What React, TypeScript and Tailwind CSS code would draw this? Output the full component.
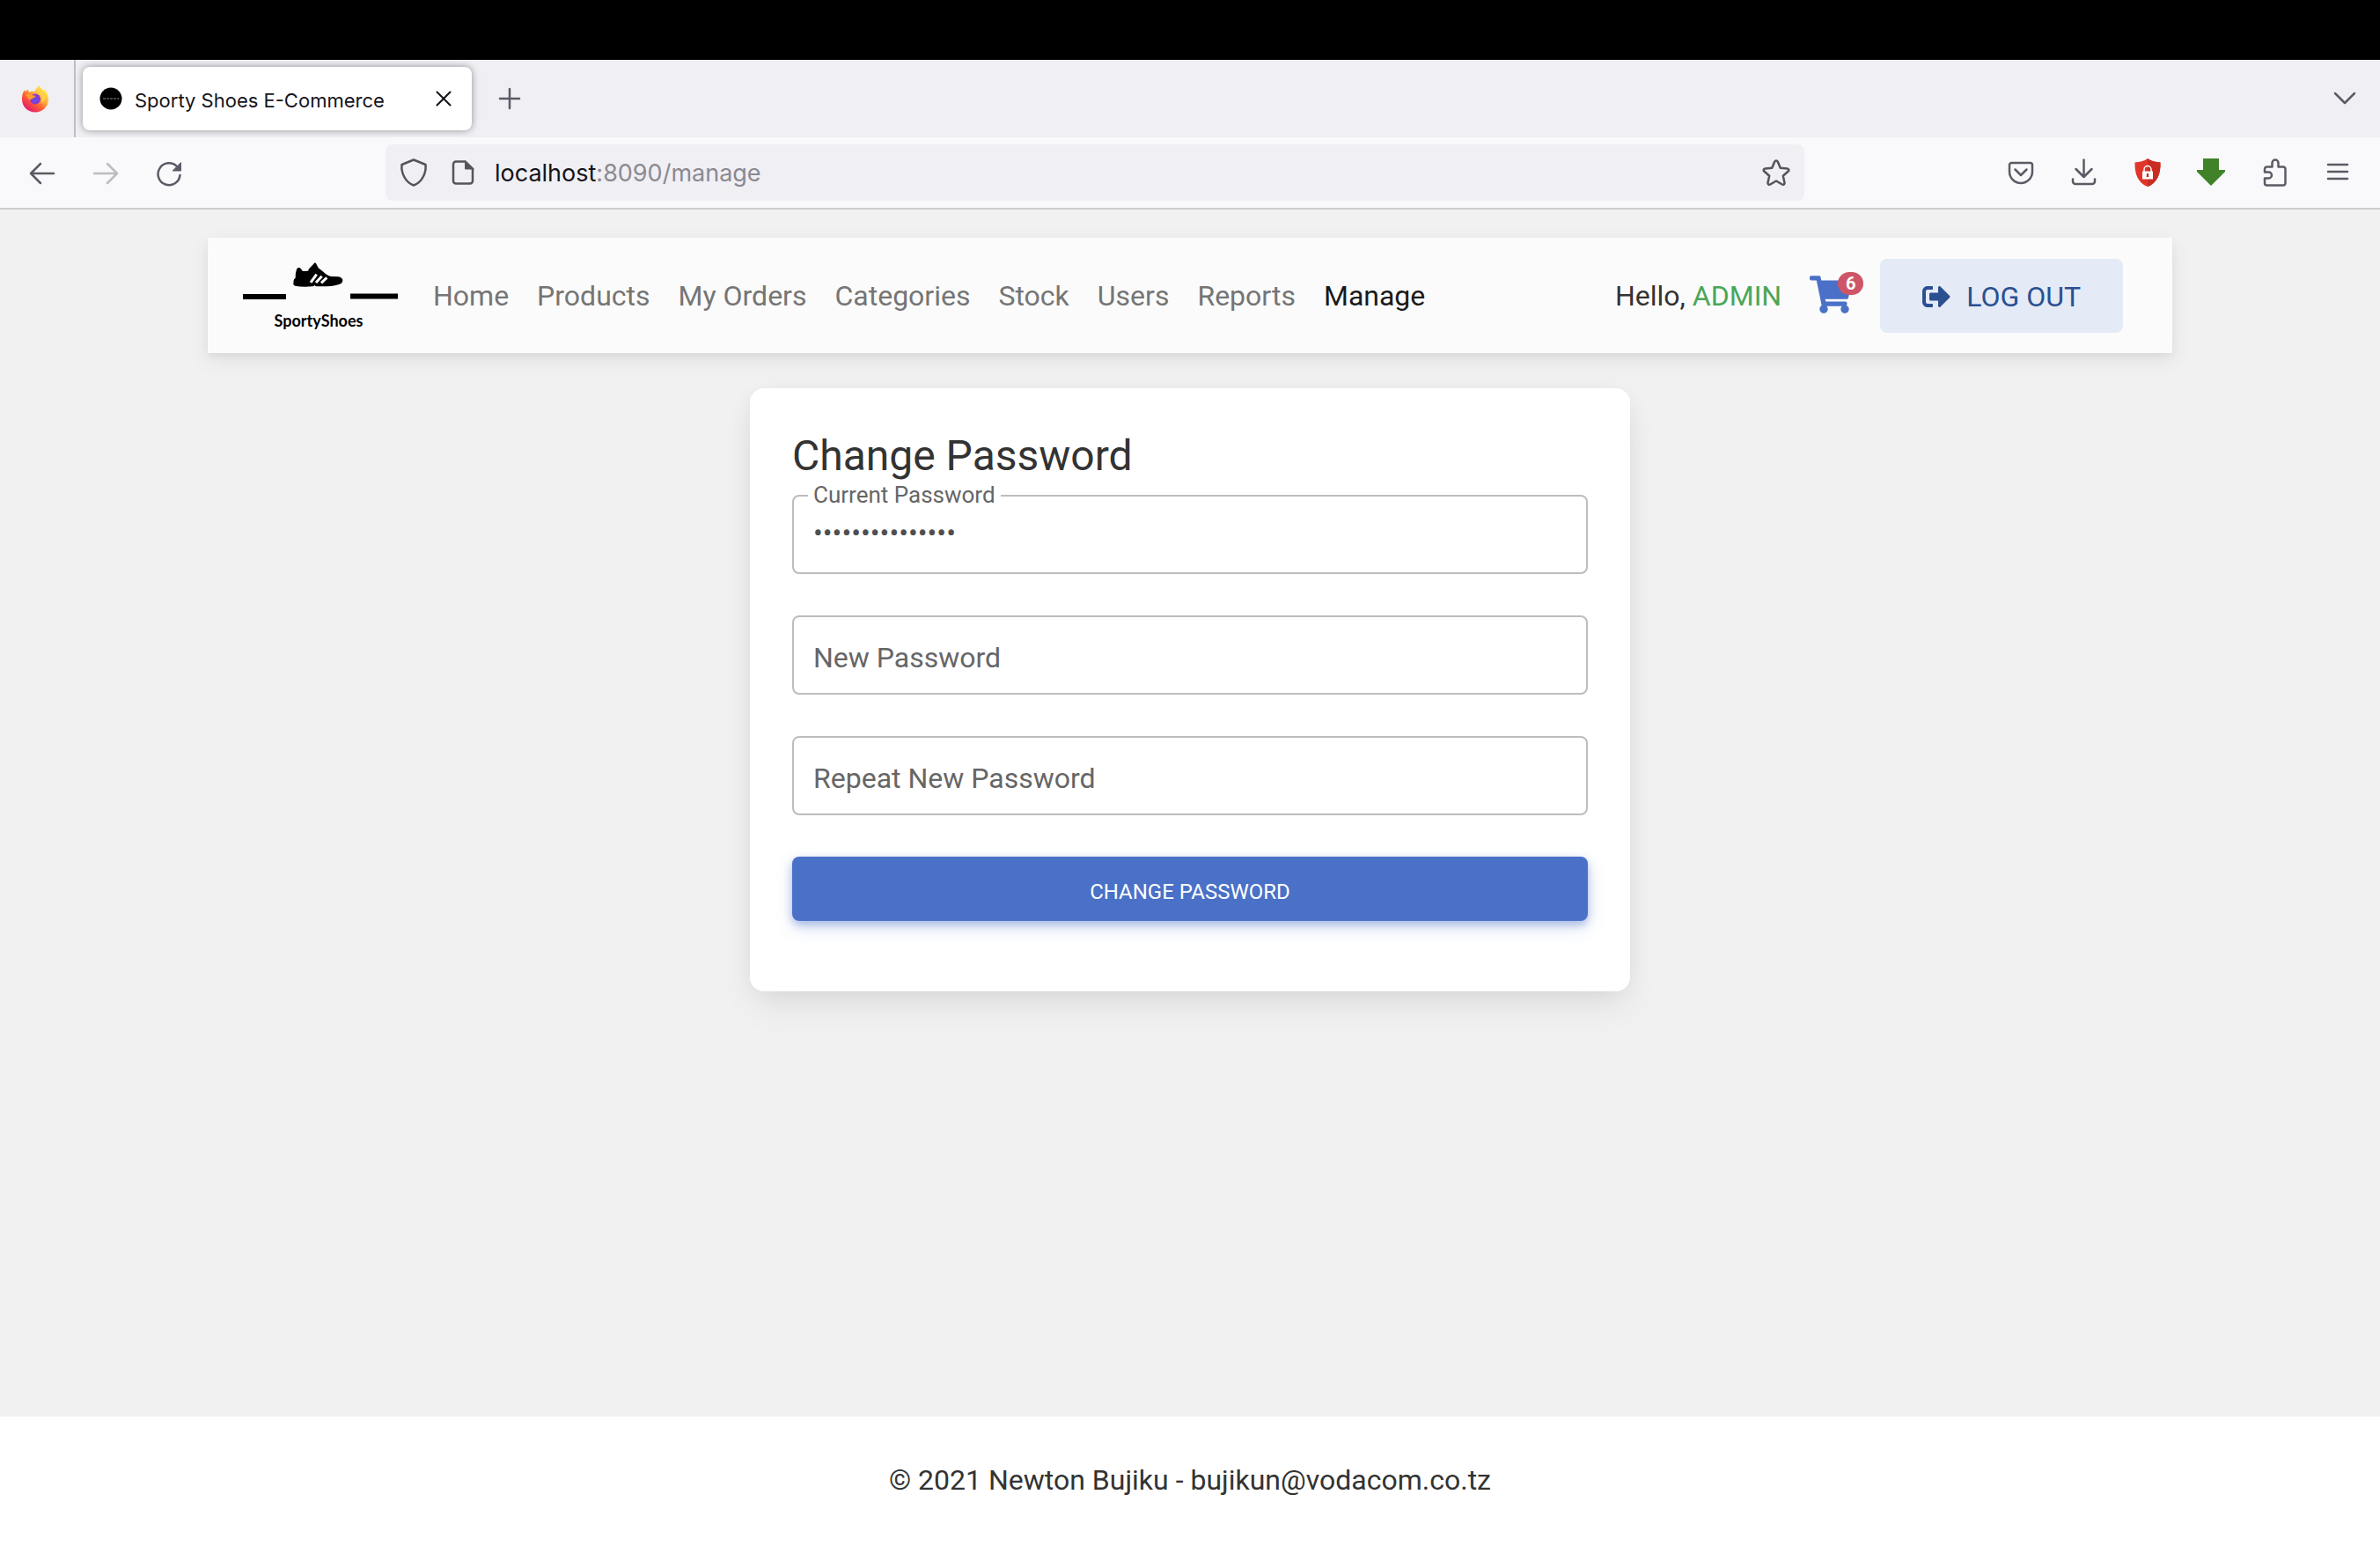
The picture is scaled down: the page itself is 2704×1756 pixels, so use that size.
import React from "react";
import { FaShoppingCart, FaSignOutAlt } from "react-icons/fa";

const navLinks = ["Home", "Products", "My Orders", "Categories", "Stock", "Users", "Reports", "Manage"];

function Icon({ children, className = "text-[#5b5b66]" }: { children: React.ReactNode; className?: string }) {
  return (
    <svg
      viewBox="0 0 32 32"
      className={`size-8 shrink-0 ${className}`}
      fill="none"
      stroke="currentColor"
      strokeWidth="2.5"
      strokeLinecap="round"
      strokeLinejoin="round"
      aria-hidden="true"
    >
      {children}
    </svg>
  );
}

function ToolButton({ label, children }: { label: string; children: React.ReactNode }) {
  return (
    <button type="button" aria-label={label} className="flex shrink-0 items-center justify-center">
      {children}
    </button>
  );
}

function FirefoxLogo() {
  return (
    <svg viewBox="0 0 32 32" className="size-8" aria-label="Firefox" role="img">
      <defs>
        <linearGradient id="ff-body" x1="0.85" y1="0.1" x2="0.2" y2="0.95">
          <stop offset="0" stopColor="#fff44f" />
          <stop offset="0.35" stopColor="#ffb03a" />
          <stop offset="0.65" stopColor="#ff5634" />
          <stop offset="1" stopColor="#e0157b" />
        </linearGradient>
        <radialGradient id="ff-globe" cx="0.5" cy="0.6" r="0.6">
          <stop offset="0" stopColor="#6a4be8" />
          <stop offset="1" stopColor="#8f35c9" />
        </radialGradient>
      </defs>
      <path
        fill="url(#ff-body)"
        d="M20 1c-1 2.500-4 4-4.500 7-3-.5-5 0-6 .8C8.300 8 7.800 6.500 7.800 5.500 6.500 6.200 5.800 7.200 5.300 8 4.500 7.500 4.300 6.500 4.300 6 1.500 9 1 13 1 16.500 1 25 7.500 31.500 16 31.500S31 25 31 17c0-5-2-9.500-5-11.500 0 1 .3 2 .2 3C25 5.500 21.500 4 20 1z"
      />
      <circle cx="16" cy="16.500" r="6" fill="url(#ff-globe)" />
      <path fill="#ff9a2e" d="M5 12c3-2.500 6-1.500 8 .3 1.500.2 3 .2 3.500.7-.3 1.500-2.500 2-3.500 2.700-1 1.300-2.500 1-3.500 1.800C8 16 6 14 5 12z" />
      <path fill="#ffd24a" d="M20 2c-2.500 3-2.500 6 .5 8 4 3 4.500 8 2 11.500 5-2 6.500-9 3-13.500C24 5.500 21 4.500 20 2z" />
    </svg>
  );
}

function SiteLogo() {
  return (
    <a href="#home" aria-label="SportyShoes" className="flex w-44 shrink-0 flex-col items-center">
      <svg viewBox="0 0 176 56" className="h-14 w-full" aria-hidden="true">
        <path d="M0 40h49v6H0zM122 39.500h54v6h-54z" />
        <g transform="translate(-16 -10) scale(0.3333)">
          <path d="M232 64q6-7 13-1l6 8q2 2 5 1l13-1q4-1 3-6l17-18q5-7 9 0l7 14 18 14q14 14 26 15l24 1q14 3 15 11 1 8-5 12-18 9-50 10h-33q-5 0-7-4-4 4-9 4-34 3-58-2-7-1-6-7l1-12q1-4 6-8 0-20 5-31z" />
          <path stroke="#fbfbfb" strokeWidth="9" fill="none" d="M279 111l20-28M297 111l20-22M315 112l19-18" />
        </g>
      </svg>
      <span className="pr-1 font-['Lato',sans-serif] text-lg leading-7 font-bold text-black">SportyShoes</span>
    </a>
  );
}

function PasswordField({ id, label, value }: { id: string; label: string; value?: string }) {
  const filled = Boolean(value);
  return (
    <div className="relative">
      <input
        id={id}
        type="password"
        defaultValue={value}
        className="block h-[90px] w-full rounded-lg border-2 border-[#bdbdbd] bg-transparent px-[22px] pb-1 text-[32px] text-[#4f4f4f] outline-none"
      />
      <label
        htmlFor={id}
        className={
          filled
            ? "absolute -top-3.5 left-[18px] bg-white pr-1.5 pl-1.5 text-[26px] leading-7 text-[#666]"
            : "absolute top-6 left-6 text-[32px] leading-[48px] text-[#666]"
        }
      >
        {label}
      </label>
    </div>
  );
}

function BrowserChrome() {
  return (
    <header className="font-['Inter',sans-serif]">
      <div className="h-17 bg-black" />
      <div className="flex h-22 items-center bg-[#f0eff4] pr-6">
        <div className="flex h-full w-[86px] items-center border-r-2 border-[#bfbfc3] pl-6">
          <FirefoxLogo />
        </div>
        <div className="ml-2 flex h-18 w-[442px] items-center rounded-lg bg-white pr-4 pl-4 shadow-[0_0_8px_rgba(0,0,0,0.4)]">
          <svg viewBox="0 0 32 32" className="size-8" aria-hidden="true">
            <circle cx="16" cy="16" r="12.500" fill="#000" />
            <path d="M7 16h18" stroke="#444" strokeWidth="2" strokeDasharray="3 1" />
          </svg>
          <span className="ml-[11px] flex-1 pt-1 text-[22px] leading-8 text-[#15141a]">Sporty Shoes E-Commerce</span>
          <ToolButton label="Close tab">
            <Icon className="text-[#15141a]">
              <path strokeWidth="2" d="M8.500 8.500l15 15M23.500 8.500l-15 15" />
            </Icon>
          </ToolButton>
        </div>
        <div className="ml-[27px] flex flex-1 items-center justify-between">
          <ToolButton label="New tab">
            <Icon><path d="M16 5v22M5 16h22" /></Icon>
          </ToolButton>
          <ToolButton label="List all tabs">
            <Icon><path d="M5 10l11 11 11-11" /></Icon>
          </ToolButton>
        </div>
      </div>
      <div className="flex h-[82px] items-center border-b-2 border-[#ccc] bg-[#f9f9fb] px-8">
        <div className="flex w-[406px] shrink-0 items-center gap-10">
          <ToolButton label="Back">
            <Icon><path d="M29 17H3M14 6L3 17l11 11" /></Icon>
          </ToolButton>
          <ToolButton label="Forward">
            <Icon className="text-[#bcbcc1]"><path d="M3 17h26M18 6l11 11-11 11" /></Icon>
          </ToolButton>
          <ToolButton label="Reload">
            <Icon>
              <path d="M28.500 19A12.500 12.500 0 1 1 25 9" />
              <path fill="currentColor" strokeWidth="1" d="M29.500 5v9h-9z" />
            </Icon>
          </ToolButton>
        </div>
        <div className="flex h-16 flex-1 items-center rounded-lg bg-[#f0eff4] px-4">
          <Icon className="text-[#55545c]">
            <path d="M16 1.500L29.500 7c1 9.500-4 20-13.500 23.500C6.500 27 1.500 16.500 2.500 7z" />
          </Icon>
          <Icon className="ml-6 text-[#55545c]">
            <path d="M18 3.500H8A3 3 0 0 0 5 6.500v19a3 3 0 0 0 3 3h16a3 3 0 0 0 3-3V12L18.500 3.500z" />
            <path fill="currentColor" strokeWidth="1" d="M18.500 3v9H28z" />
          </Icon>
          <div className="ml-5 flex-1 pt-0.5 text-[27px] text-[#8a8990]">
            <span className="text-[#15141a]">localhost</span>:8090/manage
          </div>
          <ToolButton label="Bookmark this page">
            <Icon className="text-[#55545c]">
              <path d="M14.300 3.500c.7-1.500 2.700-1.500 3.400 0l3.100 7.200 7.800.7c1.700.2 2.300 2 1.100 3.100l-5.900 5.300 1.700 7.800c.3 1.600-1.300 2.700-2.700 1.900L16 25.500l-6.800 4c-1.400.8-3-.3-2.700-1.900l1.700-7.800-5.900-5.300c-1.200-1.100-.6-2.900 1.100-3.100l7.800-.7z" />
            </Icon>
          </ToolButton>
        </div>
        <div className="flex w-[622px] shrink-0 items-center justify-end gap-10">
          <ToolButton label="Save to Pocket">
            <Icon>
              <path d="M5.500 5h21A2.500 2.500 0 0 1 29 7.500V15a13 13 0 0 1-26 0V7.500A2.500 2.500 0 0 1 5.500 5z" />
              <path d="M9.500 12.500L16 19l6.500-6.500" />
            </Icon>
          </ToolButton>
          <ToolButton label="Downloads">
            <Icon><path d="M15.500 1.500V21M6.500 12l9 9 9-9M3 23.500V26a3 3 0 0 0 3 3h19a3 3 0 0 0 3-3v-2.500" /></Icon>
          </ToolButton>
          <ToolButton label="Ad blocker">
            <svg viewBox="0 0 32 32" className="size-8" aria-hidden="true">
              <path fill="#e2352a" d="M16 0c4 3 9 4 14.500 4.500C31 17 27 28 16 32 5 28 1 17 1.500 4.500 7 4 12 3 16 0z" />
              <path fill="#c92c22" d="M16 0c4 3 9 4 14.500 4.500C31 17 27 28 16 32z" />
              <path fill="none" stroke="#fff" strokeWidth="1.5" d="M12 15v-2.500a4 4 0 0 1 8 0V15" />
              <path fill="#fff" d="M10 14.500h12v9H10z" />
              <path fill="#c92c22" d="M15 17h2l.3 4h-2.600z" />
            </svg>
          </ToolButton>
          <ToolButton label="Download helper">
            <svg viewBox="0 0 32 32" className="size-8" aria-hidden="true">
              <path fill="#40822a" d="M7 0h18v13h7v2L16 31 0 15v-2h7z" />
            </svg>
          </ToolButton>
          <ToolButton label="Extensions">
            <Icon>
              <path d="M13.500 9.500V5a3.500 3.500 0 0 1 7 0v4.500h5A2.500 2.500 0 0 1 28.500 12v16A2.500 2.500 0 0 1 26 30.500H7.500A2.500 2.500 0 0 1 5 28v-5.500h4.500a3.500 3.500 0 0 0 0-7H5V12A2.500 2.500 0 0 1 7.500 9.500z" />
            </Icon>
          </ToolButton>
          <ToolButton label="Open menu">
            <Icon><path d="M5 7h22M5 15h22M5 23h22" /></Icon>
          </ToolButton>
        </div>
      </div>
    </header>
  );
}

export default function App() {
  return (
    <div className="flex min-h-screen flex-col bg-[#f1f1f1] font-['Roboto',sans-serif] text-[32px] leading-[48px] text-[#333]">
      <BrowserChrome />
      <main className="mx-auto w-full max-w-[2232px] flex-1 pt-8">
        <nav className="flex items-center bg-[#fbfbfb] pt-6 pr-14 pb-[23px] pl-10 shadow-[0_8px_24px_0_rgba(0,0,0,0.07),0_4px_8px_rgba(0,0,0,0.05)]">
          <SiteLogo />
          <ul className="ml-10 flex flex-1 items-center gap-8">
            {navLinks.map((name) => (
              <li key={name}>
                <a
                  href={`#${name.toLowerCase().replace(" ", "-")}`}
                  className={name === "Manage" ? "text-[#1a1a1a]" : "text-[#757575]"}
                >
                  {name}
                </a>
              </li>
            ))}
          </ul>
          <p>
            Hello, <span className="text-[#4ba658]">ADMIN</span>
          </p>
          <a href="#cart" aria-label="Cart, 6 items" className="relative mr-8 mb-1 ml-8 text-[#4a71c7]">
            <FaShoppingCart className="h-[43px] w-12" />
            <span className="absolute -top-1 left-8 flex h-[26px] w-[29px] items-center justify-center rounded-full bg-[#cd5566] text-xl leading-6 font-bold text-white">
              6
            </span>
          </a>
          <button type="button" className="flex h-[84px] items-center gap-[18px] rounded-lg bg-[#e4eaf6] px-12 pt-0.5 text-[#2c4f91]">
            <FaSignOutAlt className="size-8" />
            LOG OUT
          </button>
        </nav>
        <form
          className="mx-auto mt-10 flex w-full max-w-[1000px] flex-col rounded-2xl bg-white px-12 pt-12 pb-20 shadow-[0_4px_30px_-6px_rgba(0,0,0,0.07),0_20px_40px_-4px_rgba(0,0,0,0.07)]"
          onSubmit={(event) => event.preventDefault()}
        >
          <h1 className="mb-4 text-5xl leading-[57px]">Change Password</h1>
          <div className="flex flex-col gap-[47px]">
            <PasswordField id="current-password" label="Current Password" value="sportyshoes2021" />
            <PasswordField id="new-password" label="New Password" />
            <PasswordField id="repeat-password" label="Repeat New Password" />
            <button
              type="submit"
              className="h-[73px] rounded-lg bg-[#4a71c7] pt-1.5 text-2xl text-white shadow-[0_4px_10px_0_rgba(74,113,199,0.4),0_8px_20px_0_rgba(74,113,199,0.2)]"
            >
              CHANGE PASSWORD
            </button>
          </div>
        </form>
      </main>
      <footer className="bg-white pt-12 pb-[51px] text-center">© 2021 Newton Bujiku - bujikun@vodacom.co.tz</footer>
    </div>
  );
}
